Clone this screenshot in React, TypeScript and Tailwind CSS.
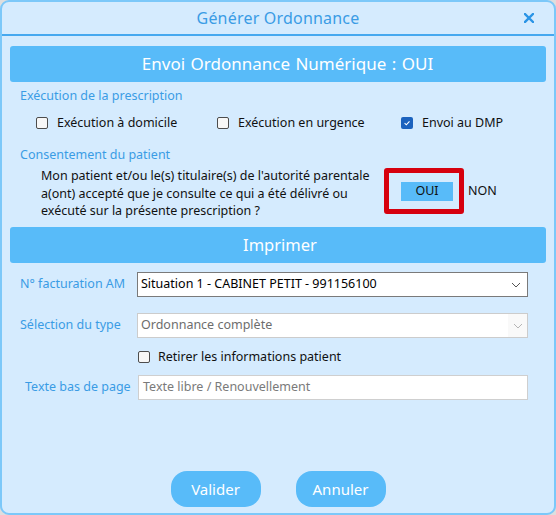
import React from "react";

function Box({ checked }: { checked?: boolean }) {
  if (checked) {
    return (
      <span className="flex h-[12px] w-[12px] shrink-0 items-center justify-center rounded-[2px] bg-[#1b62be]">
        <svg width="8" height="8" viewBox="0 0 8 8">
          <path d="M1.6 4.2 L3.3 5.8 L6.5 2.3" fill="none" stroke="#ffffff" strokeWidth="1.1" />
        </svg>
      </span>
    );
  }
  return <span className="block h-[12px] w-[12px] shrink-0 rounded-[2px] border border-[#4d4d4d] bg-[#f7f7f7]" />;
}

function Chevron({ color }: { color: string }) {
  return (
    <svg width="10" height="6" viewBox="0 0 10 6">
      <path d="M1 1 L5 5 L9 1" fill="none" stroke={color} strokeWidth="1" />
    </svg>
  );
}

export default function App() {
  return (
    <div className="h-[515px] w-[556px] bg-[#dedede]" style={{ fontFamily: '"Noto Sans", "Open Sans", sans-serif' }}>
      <div className="flex h-[515px] w-[556px] flex-col rounded-[9px] border-2 border-[#7cc8f9] bg-[#d5ebfe]">
        {/* Title bar */}
        <div className="relative flex h-[34px] shrink-0 items-center justify-center border-b-2 border-[#46a8ef]">
          <span className="text-[16px] tracking-[0.2px] text-[#3a9ce5]">Générer Ordonnance</span>
          <svg className="absolute right-[20px] top-[11px]" width="10" height="10" viewBox="0 0 10 10">
            <path d="M1 1 L9 9 M9 1 L1 9" stroke="#2a94e6" strokeWidth="2.4" strokeLinecap="square" />
          </svg>
        </div>

        <div className="flex flex-1 flex-col px-[8px] pb-[6px]">
          <div className="mt-[10px] flex h-[36px] items-center justify-center rounded-[3px] bg-[#58bbf9] pl-[19px]">
            <span className="text-[17px] text-white [word-spacing:1px]">Envoi Ordonnance Numérique : OUI</span>
          </div>

          <div className="mt-[5px] flex h-[18px] items-center pl-[10px] text-[12.5px] text-[#3a9ce5]">Exécution de la prescription</div>

          <div className="mt-[9px] flex h-[18px] items-center pl-[26px] text-[12.5px] text-[#111]">
            <div className="flex w-[181px] items-center gap-[9px]">
              <Box />
              <span>Exécution à domicile</span>
            </div>
            <div className="flex w-[184px] items-center gap-[9px]">
              <Box />
              <span>Exécution en urgence</span>
            </div>
            <div className="flex items-center gap-[9px]">
              <Box checked />
              <span>Envoi au DMP</span>
            </div>
          </div>

          <div className="mt-[14px] flex h-[18px] items-center pl-[10px] text-[12.5px] text-[#3a9ce5]">Consentement du patient</div>

          <div className="mt-[3px] flex h-[53px] items-start">
            <p className="ml-[31px] w-[343px] whitespace-nowrap text-[12.5px] leading-[17.5px] text-[#111]">
              Mon patient et/ou le(s) titulaire(s) de l'autorité parentale
              <br />
              a(ont) accepté que je consulte ce qui a été délivré ou
              <br />
              exécuté sur la présente prescription ?
            </p>
            <div className="mt-[1px] h-[46px] w-[80px] shrink-0 rounded-[3px] border-[5px] border-[#d6000e] pl-[12px] pt-[9px]">
              <div className="flex h-[19px] w-[52px] items-center justify-center bg-[#58bbf9] text-[12.5px] text-[#111]">OUI</div>
            </div>
            <span className="ml-[4px] mt-[15px] text-[12.5px] text-[#111]">NON</span>
          </div>

          <div className="mt-[7px] flex h-[36px] items-center justify-center rounded-[3px] bg-[#58bbf9] pl-[4px]">
            <span className="text-[16.5px] text-white">Imprimer</span>
          </div>

          <div className="mt-[9px] flex h-[25px] items-center">
            <span className="w-[127px] pl-[10px] text-[12.5px] text-[#3a9ce5]">N° facturation AM</span>
            <div className="flex h-[25px] w-[391px] items-center justify-between border border-[#7a7a7a] bg-white pl-[3px] pr-[6px] text-[12.5px] text-black">
              <span>Situation 1 - CABINET PETIT - 991156100</span>
              <Chevron color="#555555" />
            </div>
          </div>

          <div className="mt-[16px] flex h-[25px] items-center">
            <span className="w-[127px] pl-[10px] text-[12.5px] text-[#3a9ce5]">Sélection du type</span>
            <div className="flex h-[25px] w-[391px] items-center justify-between border border-[#cccccc] bg-white pl-[3px] text-[12.5px] text-[#6d6d6d]">
              <span>Ordonnance complète</span>
              <span className="flex h-full w-[19px] items-center justify-center bg-[#f9f9f9]">
                <Chevron color="#b5b5b5" />
              </span>
            </div>
          </div>

          <div className="mt-[10px] flex h-[18px] items-center gap-[8px] pl-[128px] text-[12.5px] text-[#111]">
            <Box />
            <span>Retirer les informations patient</span>
          </div>

          <div className="mt-[9px] flex h-[25px] items-center">
            <span className="w-[128px] pl-[15px] text-[12.5px] text-[#3a9ce5]">Texte bas de page</span>
            <div className="flex h-[25px] w-[390px] items-center border border-[#cfcfcf] bg-white pl-[4px] text-[12.5px] text-[#7a7a7a]">
              Texte libre / Renouvellement
            </div>
          </div>

          <div className="flex-1" />

          <div className="flex justify-center gap-[35px]">
            <div className="flex h-[36px] w-[90px] items-center justify-center rounded-[16px] bg-[#58bbf9] text-[15px] text-white">Valider</div>
            <div className="flex h-[36px] w-[90px] items-center justify-center rounded-[16px] bg-[#58bbf9] text-[15px] text-white">Annuler</div>
          </div>
        </div>
      </div>
    </div>
  );
}
